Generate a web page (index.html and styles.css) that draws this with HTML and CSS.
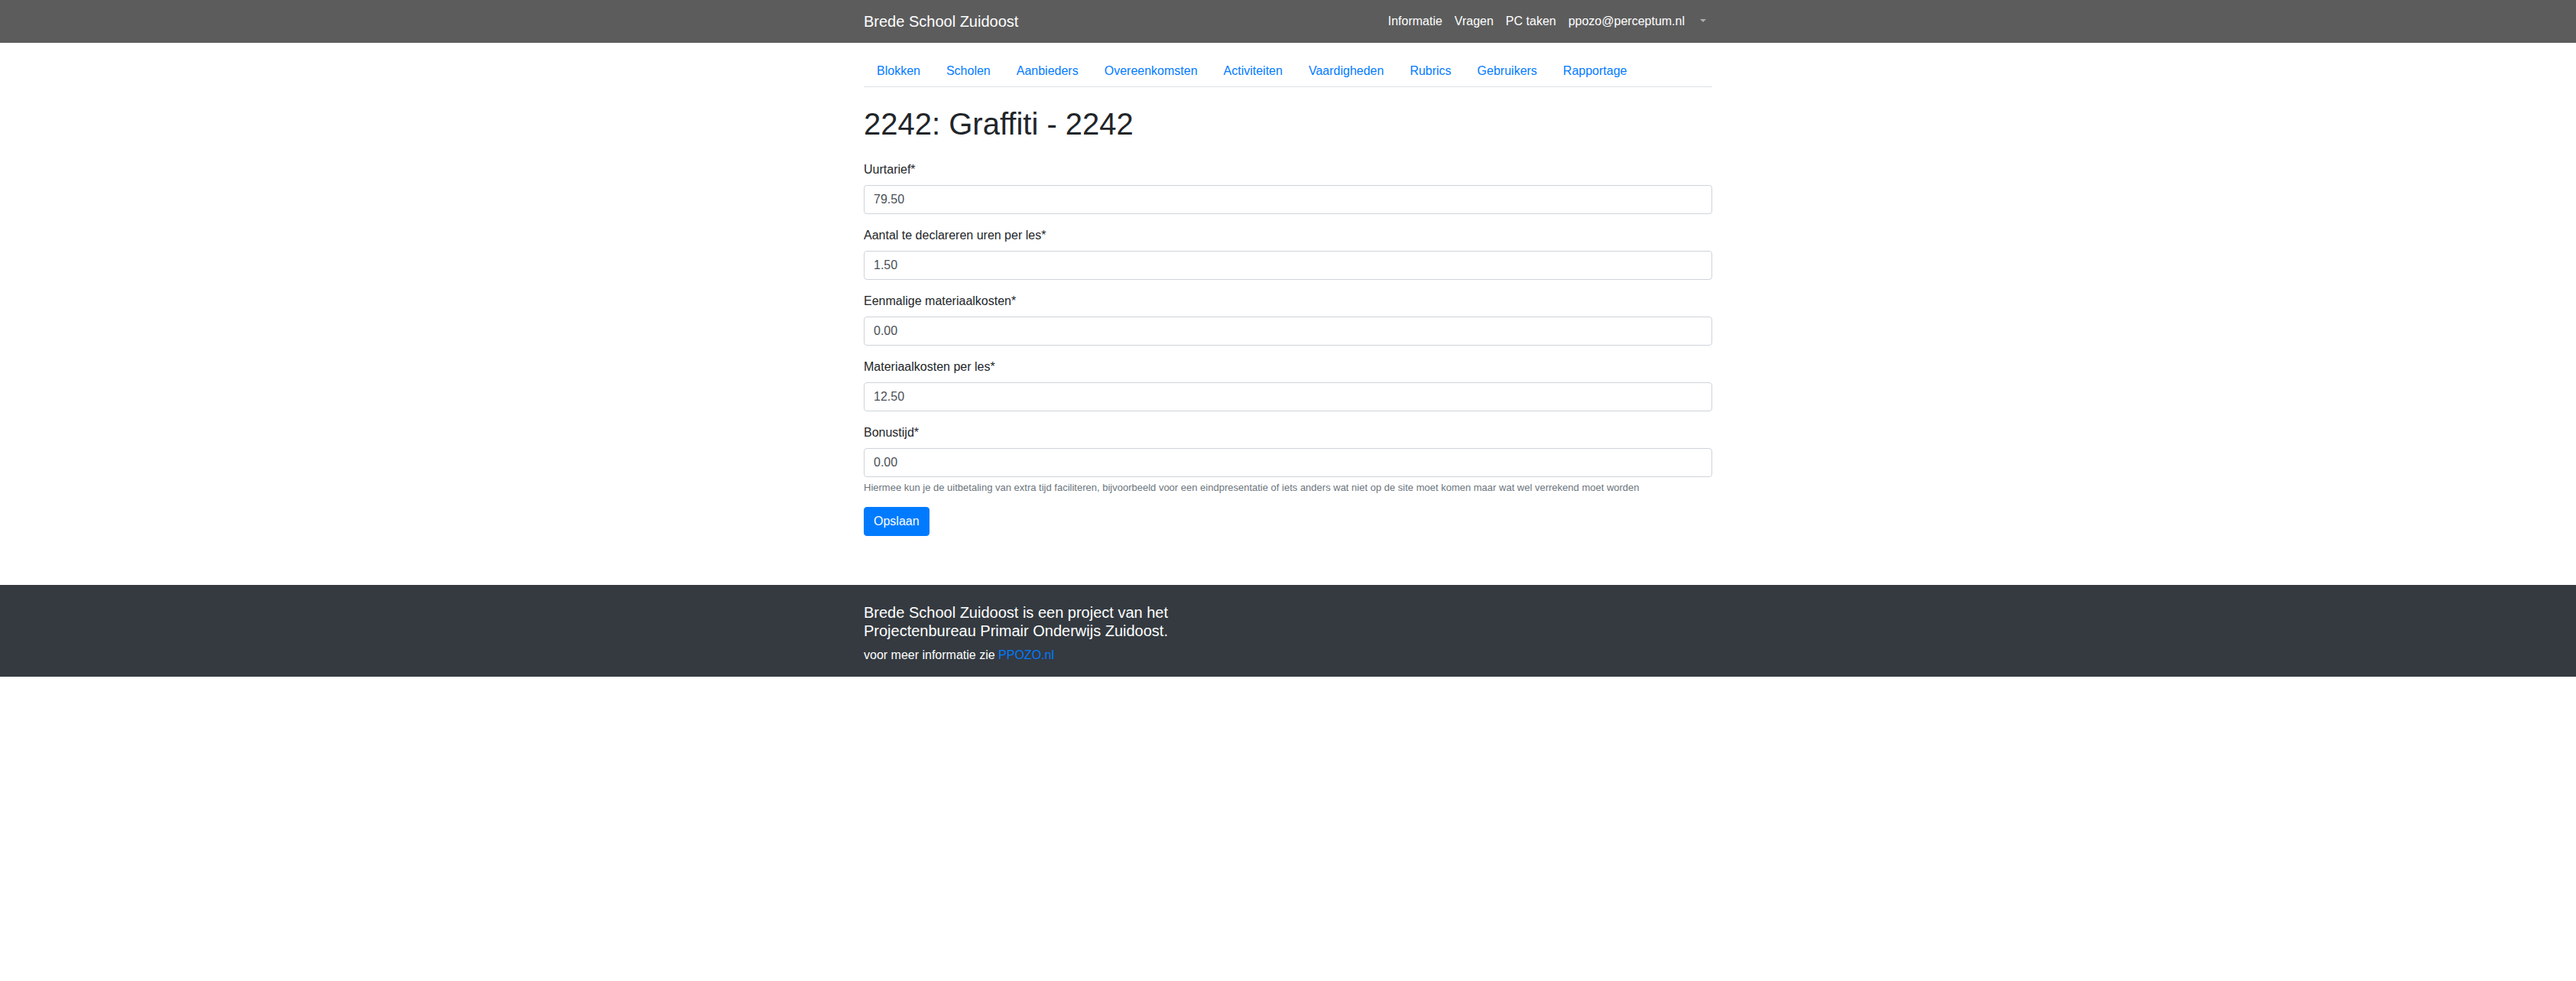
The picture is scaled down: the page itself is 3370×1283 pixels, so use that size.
FILE: index.html
```html
<!DOCTYPE html>
<html lang="nl">
<head>
<meta charset="utf-8">
<meta name="viewport" content="width=device-width, initial-scale=1">
<title>Brede School Zuidoost</title>
<link rel="stylesheet" href="styles.css">
</head>
<body>
<header class="navbar">
  <div class="container navbar-inner">
    <a class="brand" href="#">Brede School Zuidoost</a>
    <nav class="navbar-links">
      <a href="#">Informatie</a>
      <a href="#">Vragen</a>
      <a href="#">PC taken</a>
      <a href="#">ppozo@perceptum.nl</a>
      <a class="toggle" href="#" aria-label="Menu"></a>
    </nav>
  </div>
</header>
<main class="container content">
  <nav class="tabs">
    <a href="#">Blokken</a>
    <a href="#">Scholen</a>
    <a href="#">Aanbieders</a>
    <a href="#">Overeenkomsten</a>
    <a href="#">Activiteiten</a>
    <a href="#">Vaardigheden</a>
    <a href="#">Rubrics</a>
    <a href="#">Gebruikers</a>
    <a href="#">Rapportage</a>
  </nav>
  <h1>2242: Graffiti - 2242</h1>
  <form>
    <div class="group">
      <label for="uurtarief">Uurtarief*</label>
      <input id="uurtarief" type="text" value="79.50" required>
    </div>
    <div class="group">
      <label for="uren">Aantal te declareren uren per les*</label>
      <input id="uren" type="text" value="1.50" required>
    </div>
    <div class="group">
      <label for="eenmalig">Eenmalige materiaalkosten*</label>
      <input id="eenmalig" type="text" value="0.00" required>
    </div>
    <div class="group">
      <label for="materiaal">Materiaalkosten per les*</label>
      <input id="materiaal" type="text" value="12.50" required>
    </div>
    <div class="group">
      <label for="bonustijd">Bonustijd*</label>
      <input id="bonustijd" type="text" value="0.00" aria-describedby="bonustijd-hulp" required>
      <small id="bonustijd-hulp">Hiermee kun je de uitbetaling van extra tijd faciliteren, bijvoorbeeld voor een eindpresentatie of iets anders wat niet op de site moet komen maar wat wel verrekend moet worden</small>
    </div>
    <button type="submit">Opslaan</button>
  </form>
</main>
<footer class="footer">
  <div class="container">
    <h2>Brede School Zuidoost is een project van het<br>Projectenbureau Primair Onderwijs Zuidoost.</h2>
    <p>voor meer informatie zie <a href="#">PPOZO.nl</a></p>
  </div>
</footer>
</body>
</html>
```
FILE: styles.css
```css
* {
  box-sizing: border-box;
}

body {
  margin: 0;
  background: #fff;
  color: #212529;
  font: 16px/24px "Liberation Sans", Arial, sans-serif;
}

a {
  color: #007bff;
  text-decoration: none;
}

.container {
  width: 100%;
  max-width: 1140px;
  margin: 0 auto;
  padding: 0 15px;
}

.navbar {
  padding: 8px 16px;
  background: #5c5c5c;
}

.navbar-inner {
  display: flex;
  flex-wrap: wrap;
  align-items: center;
  justify-content: space-between;
}

.navbar a {
  color: #fff;
}

.brand {
  padding: 5px 0;
  font-size: 20px;
  line-height: 30px;
}

.navbar-links {
  display: flex;
  flex-wrap: wrap;
}

.navbar-links a {
  padding: 8px;
}

.toggle::after {
  content: "";
  display: inline-block;
  margin-left: 4px;
  vertical-align: 4px;
  border: 4px solid transparent;
  border-top-color: rgba(255, 255, 255, 0.5);
  border-bottom: 0;
}

.content {
  padding-top: 16px;
  padding-bottom: 64px;
}

.tabs {
  display: flex;
  flex-wrap: wrap;
  margin-bottom: 24px;
  border-bottom: 1px solid #dee2e6;
}

.tabs a {
  padding: 8px 16px;
  border: 1px solid transparent;
  border-bottom: 0;
}

h1 {
  margin: 0 0 24px;
  font-size: 40px;
  font-weight: 500;
  line-height: 48px;
}

.group {
  margin-bottom: 16px;
}

label {
  display: inline-block;
  margin-bottom: 8px;
}

input {
  display: block;
  width: 100%;
  height: 38px;
  padding: 6px 12px;
  border: 1px solid #ced4da;
  border-radius: 4px;
  background: #fff;
  color: #495057;
  font: inherit;
}

small {
  display: block;
  margin-top: 4px;
  color: #6c757d;
  font-size: 13px;
  line-height: 19px;
}

button {
  padding: 6px 12px;
  border: 1px solid #007bff;
  border-radius: 4px;
  background: #007bff;
  color: #fff;
  font: inherit;
}

.footer {
  padding: 24px 0 16px;
  background: #343a40;
  color: #fff;
}

h2 {
  margin: 0 0 8px;
  font-size: 20px;
  font-weight: 500;
  line-height: 24px;
}

p {
  margin: 0;
}
```
